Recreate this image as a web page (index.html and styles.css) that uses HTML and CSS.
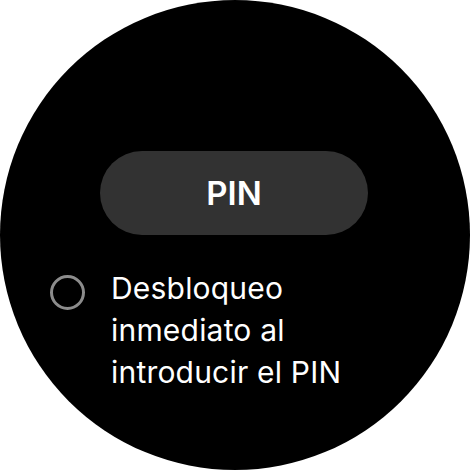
FILE: index.html
```html
<!DOCTYPE html>
<html lang="es">
<head>
    <meta charset="UTF-8">
    <meta name="viewport" content="width=device-width, initial-scale=1.0">
    <title>PIN</title>
    <link rel="stylesheet" href="styles.css">
</head>
<body>
    <div class="watch">
        <button class="pill">PIN</button>
        <div class="option">
            <span class="radio"></span>
            <p class="label">Desbloqueo inmediato al introducir el PIN</p>
        </div>
    </div>
</body>
</html>
```

FILE: styles.css
```css
body { margin: 0; background: #fff; font-family: Inter, Roboto, sans-serif; }
.watch { width: 470px; height: 470px; border-radius: 50%; background: #000; color: #fff; box-sizing: border-box; padding-top: 151px; display: flex; flex-direction: column; }
.pill { align-self: flex-start; margin-left: 100px; width: 268px; height: 84px; border: none; border-radius: 42px; background: #323232; color: #fff; font-family: inherit; font-size: 33px; font-weight: 600; padding: 0; }
.option { display: flex; align-items: flex-start; margin-top: 32px; padding-left: 50px; }
.radio { width: 29px; height: 29px; border: 3px solid #8c8c8c; border-radius: 50%; margin-top: 8px; flex-shrink: 0; }
.label { margin: 0 0 0 26px; width: 290px; font-size: 30px; letter-spacing: 0.2px; line-height: 42px; }
```
